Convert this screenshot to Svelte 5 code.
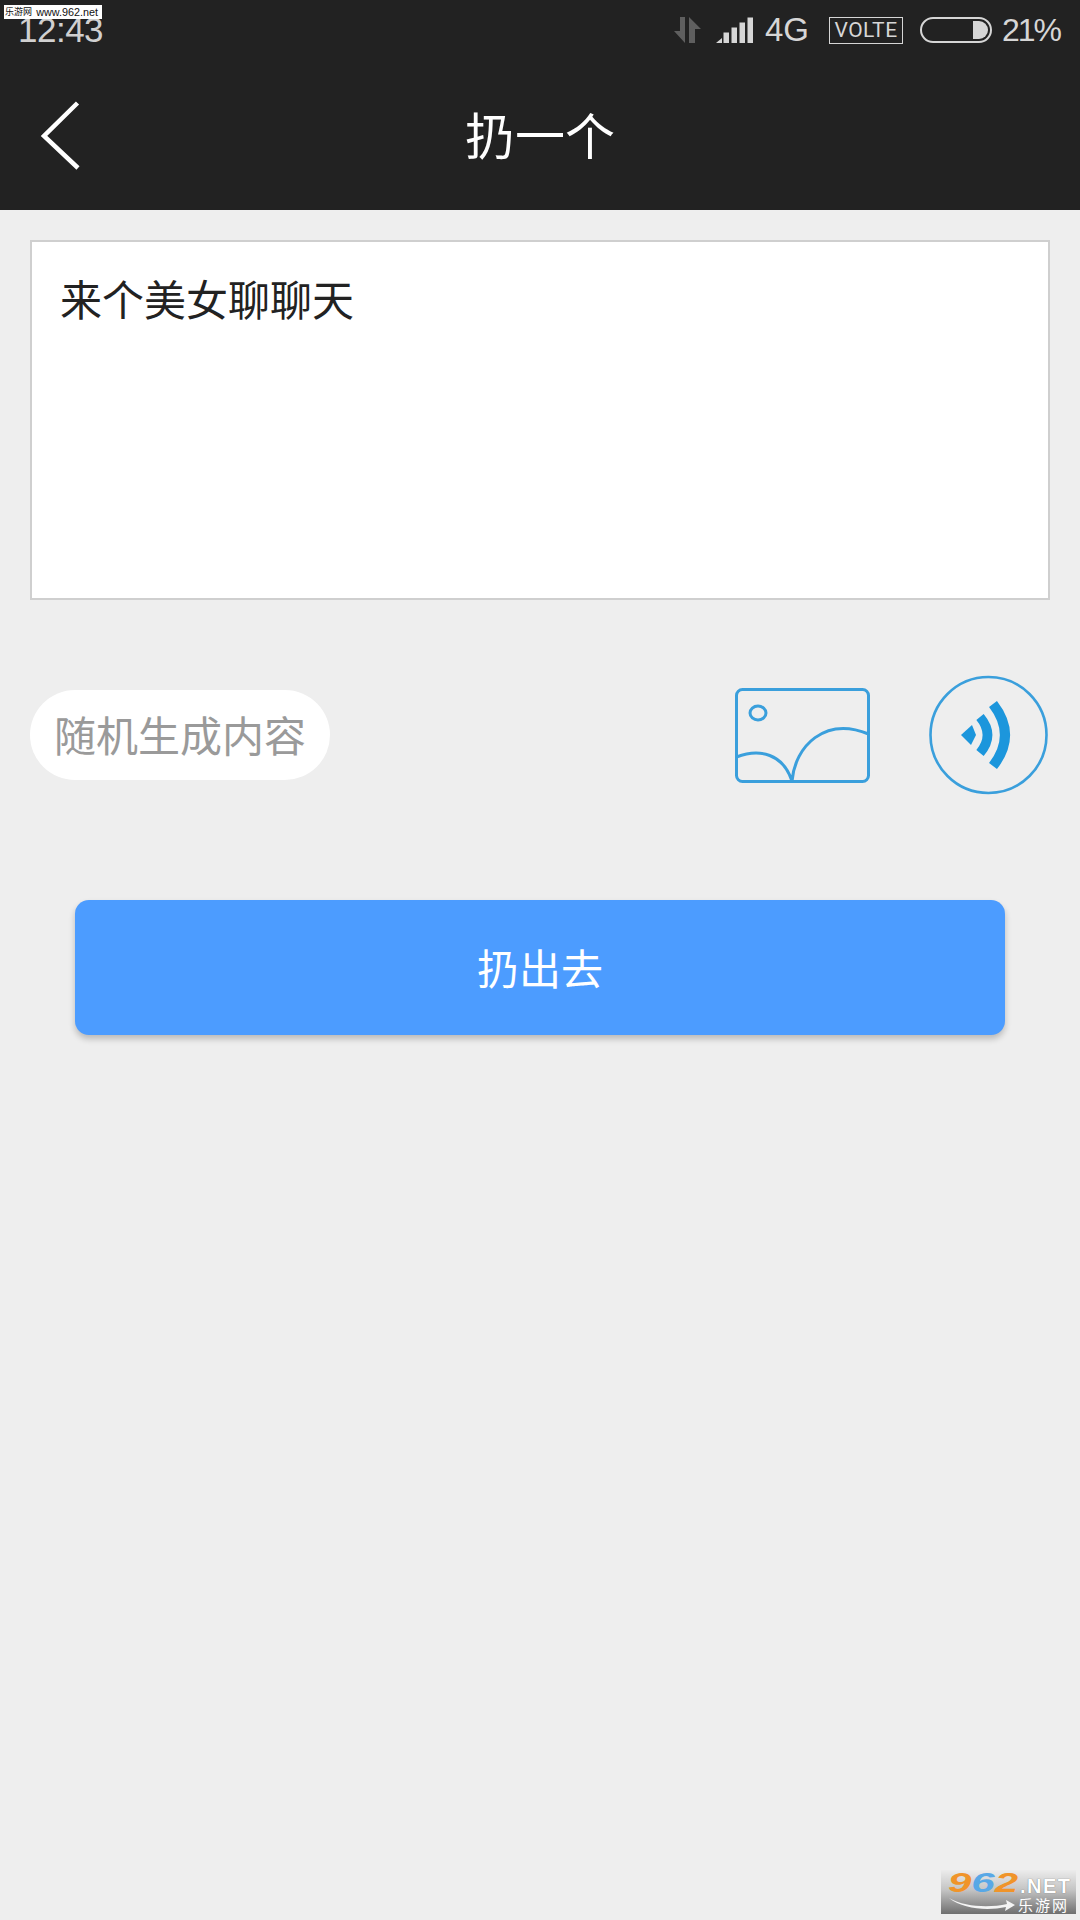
<script>
  const signalBars = [
    { x: 8, h: 10.5 },
    { x: 16, h: 15.5 },
    { x: 24, h: 20.5 },
    { x: 32, h: 25.5 }
  ];
</script>

<div class="page">
  <header class="top">
    <div class="status">
      <span class="time">12:43</span>
      <div class="status-right">
        <svg class="arrows" width="27" height="26" viewBox="0 0 27 26">
          <path d="M11 0V26L0 14H6V0Z" fill="#5f5f5f" />
          <path d="M15 26V0L27 12H21V26Z" fill="#5f5f5f" />
        </svg>
        <svg class="signal" width="37" height="26" viewBox="0 0 37 26">
          <path d="M0 26L6 21V26Z" fill="#d6d6d6" />
          {#each signalBars as bar}
            <rect x={bar.x - 0.5} y={26 - bar.h} width="5.5" height={bar.h} fill="#d6d6d6" />
          {/each}
        </svg>
        <span class="net">4G</span>
        <span class="volte">VOLTE</span>
        <div class="battery"><div class="level"></div></div>
        <span class="pct">21%</span>
      </div>
    </div>
    <div class="nav">
      <svg class="back" width="42" height="72" viewBox="0 0 42 72">
        <path d="M37.500 2L4 35L38 67" fill="none" stroke="#fff" stroke-width="4.500" />
      </svg>
      <h1>扔一个</h1>
    </div>
  </header>

  <main class="content">
    <div class="input">来个美女聊聊天</div>

    <div class="tools">
      <button class="random">随机生成内容</button>
      <div class="icons">
        <svg width="135" height="95" viewBox="0 0 135 95" fill="none" stroke="#3a9fdc" stroke-width="3">
          <rect x="1.500" y="1.500" width="132" height="92" rx="6" />
          <ellipse cx="23" cy="25" rx="8" ry="7" />
          <path d="M1.500 69C25 60 48 66 57 93C60 58 90 28 133.500 46" />
        </svg>
        <svg class="wave" width="118" height="120" viewBox="0 0 118 120" fill="none">
          <circle cx="58.500" cy="60" r="58" stroke="#3a9fdc" stroke-width="2.600" />
          <path d="M31 60L42 50L46 60L41 70Z" fill="#1c96dc" />
          <path d="M50 42Q65 60 50 78" stroke="#1c96dc" stroke-width="9.500" />
          <path d="M63 29Q87 60 63 91" stroke="#1c96dc" stroke-width="10" />
        </svg>
      </div>
    </div>

    <button class="send">扔出去</button>
  </main>

  <div class="mark-top"><b>乐游网</b><span>www.962.net</span></div>
  <div class="mark-bottom">
    <div class="logo"><i>9</i><i class="blue">6</i><i>2</i></div>
    <span class="dotnet">.NET</span>
    <svg class="swoosh" width="66" height="14" viewBox="0 0 66 14">
      <path d="M0 1C16 10 40 11 58 7L57 3L66 8L56 14L57 10C38 14 14 12 0 1Z" fill="#f4f4f4" />
    </svg>
    <span class="logo-sub">乐游网</span>
  </div>
</div>

<style>
  :global(body) {
    margin: 0;
    background: #eeeeee;
  }

  .page {
    position: relative;
    height: 1920px;
    overflow: hidden;
    background: #eeeeee;
    font-family: "Noto Sans CJK SC", "Noto Sans", sans-serif;
  }

  .top {
    height: 210px;
    background: #222222;
    color: #fff;
  }

  .status {
    display: flex;
    justify-content: space-between;
    align-items: center;
    height: 60px;
    padding: 0 19px 0 18px;
    color: #d6d6d6;
    font-family: "Liberation Sans", sans-serif;
    font-size: 33px;
  }

  .time {
    font-size: 35px;
    letter-spacing: -0.5px;
    color: #d0d0d0;
  }

  .status-right {
    display: flex;
    align-items: center;
  }

  .arrows {
    margin-right: 15px;
  }

  .signal {
    margin-right: 12px;
  }

  .net {
    margin-right: 20px;
  }

  .volte {
    box-sizing: border-box;
    width: 74px;
    height: 27px;
    margin-right: 17px;
    border: 1px solid #d6d6d6;
    text-align: center;
    font-family: Roboto, sans-serif;
    font-size: 21px;
    font-weight: 400;
    line-height: 25px;
    letter-spacing: 0.500px;
  }

  .battery {
    display: flex;
    justify-content: flex-end;
    box-sizing: border-box;
    width: 72px;
    height: 26px;
    margin-right: 10px;
    padding: 2px;
    border: 2px solid #d6d6d6;
    border-radius: 13px;
  }

  .level {
    width: 15px;
    background: #d6d6d6;
    border-radius: 0 9px 9px 0;
  }

  .pct {
    width: 59px;
    font-size: 32px;
    letter-spacing: -2px;
  }

  .nav {
    position: relative;
    display: flex;
    justify-content: center;
    align-items: center;
    height: 150px;
  }

  .back {
    position: absolute;
    left: 40px;
    top: 41px;
  }

  h1 {
    margin: 0 0 4px;
    font-size: 50px;
    font-weight: 400;
    line-height: 146px;
  }

  .content {
    display: flex;
    flex-direction: column;
    padding: 30px 30px 0;
  }

  .input {
    box-sizing: border-box;
    height: 360px;
    padding: 31px 28px;
    background: #fff;
    border: 2px solid #cfcfcf;
    color: #222;
    font-size: 42px;
    line-height: 50px;
  }

  .tools {
    display: flex;
    justify-content: space-between;
    align-items: center;
    height: 120px;
    margin-top: 75px;
  }

  .random {
    width: 300px;
    height: 90px;
    padding: 0 0 4px;
    border: 0;
    border-radius: 45px;
    background: #fff;
    color: #9a9a9a;
    font: inherit;
    font-size: 42px;
  }

  .icons {
    display: flex;
    align-items: center;
    gap: 60px;
    margin-right: 2px;
  }

  .wave {
    overflow: visible;
  }

  .send {
    align-self: center;
    width: 930px;
    height: 135px;
    margin-top: 105px;
    padding: 0 0 3px;
    border: 0;
    border-radius: 14px;
    background: #4c9cff;
    box-shadow: 0 4px 6px rgba(0, 0, 0, 0.22);
    color: #fff;
    font: inherit;
    font-size: 42px;
  }

  .mark-top {
    position: absolute;
    left: 4px;
    top: 5px;
    display: flex;
    justify-content: space-between;
    box-sizing: border-box;
    width: 98px;
    height: 14px;
    padding: 0 4px 0 1px;
    background: #fff;
    color: #111;
    font-family: "Liberation Sans", "Noto Sans CJK SC", sans-serif;
    font-size: 10.800px;
    line-height: 14px;
    white-space: nowrap;
  }

  .mark-top b {
    font-size: 9px;
    font-weight: 400;
  }

  .mark-bottom {
    position: absolute;
    left: 941px;
    top: 1870px;
    width: 135px;
    height: 44px;
    background: linear-gradient(#ececec, #c4c4c4 45%, #6f6f6f);
  }

  .logo {
    position: absolute;
    left: 7px;
    top: 1px;
    display: flex;
    width: 48px;
    transform: scaleX(1.500);
    transform-origin: left top;
    font-family: "Liberation Sans", sans-serif;
    font-size: 28px;
    font-weight: 700;
    line-height: 24px;
  }

  .logo i {
    color: #f0942a;
  }

  .logo i.blue {
    color: #58a8e6;
  }

  .dotnet {
    position: absolute;
    left: 79px;
    top: 7px;
    color: #fff;
    font-family: "Liberation Sans", sans-serif;
    font-size: 20px;
    font-weight: 700;
    line-height: 18px;
    letter-spacing: 1.500px;
    text-shadow: 0 0 1px #555;
  }

  .swoosh {
    position: absolute;
    left: 8px;
    top: 27px;
  }

  .logo-sub {
    position: absolute;
    left: 77px;
    top: 26px;
    color: #fff;
    font-size: 15px;
    line-height: 17px;
    letter-spacing: 2px;
  }
</style>
